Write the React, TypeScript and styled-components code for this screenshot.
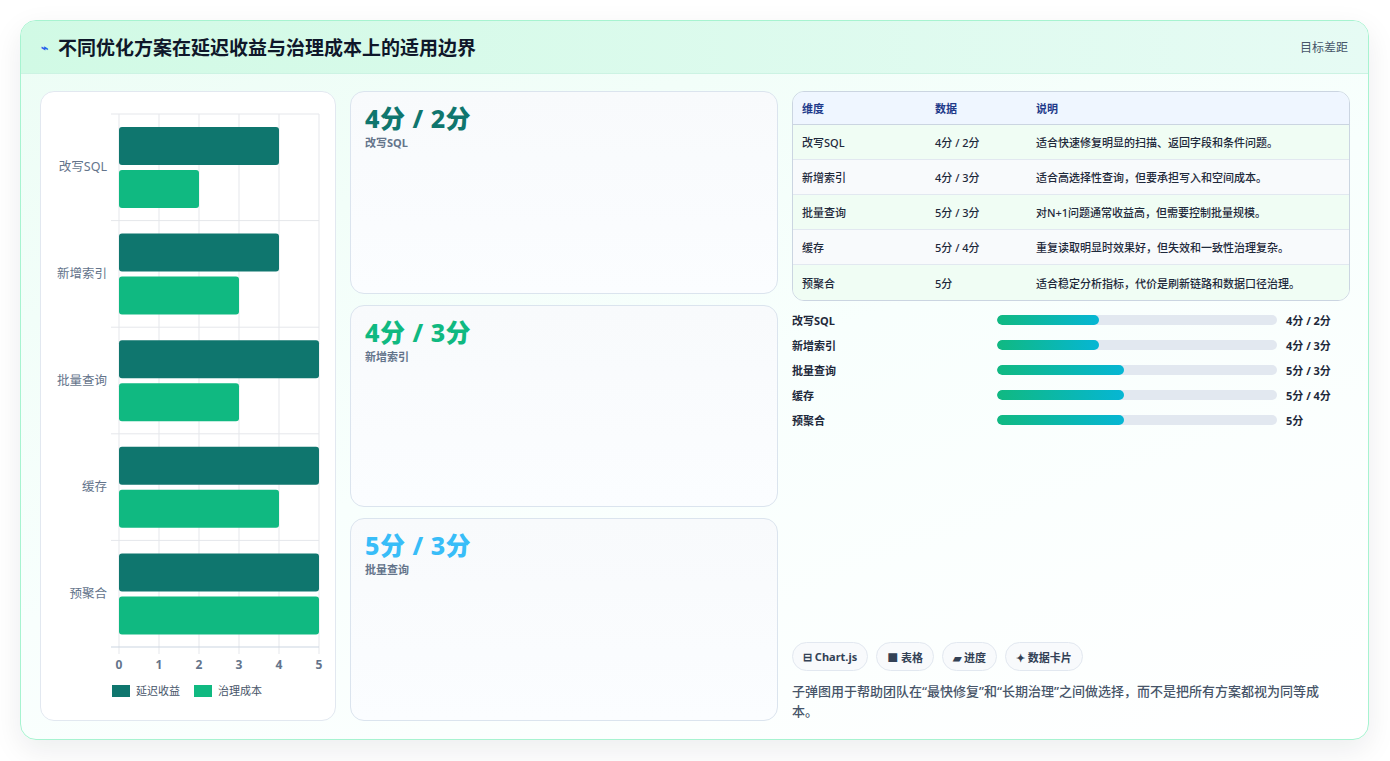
import React from "react";
import styled, { createGlobalStyle } from "styled-components";

const G = createGlobalStyle`
  html,body{margin:0;padding:0;background:#fff;}
  body{font-family:"Noto Sans","Noto Sans CJK SC",sans-serif;}
  *{box-sizing:border-box;}
`;
const Page = styled.div`padding:20px 20px 20px 20px;width:1390px;height:761px;`;
const Card = styled.div`
  width:1349px;height:720px;border:1px solid #a7f3d0;border-radius:16px;overflow:hidden;
  box-shadow:0 10px 30px rgba(15,23,42,0.08);
  background:linear-gradient(160deg,#ecfdf5 0%,#f8fffd 50%,#ffffff 100%);
  display:flex;flex-direction:column;
`;
const Header = styled.div`
  height:55px;display:flex;align-items:center;justify-content:space-between;padding:0 20px;
  background:linear-gradient(90deg,#d1fae5,#e6fbf4);border-bottom:1px solid #ccf3e3;
`;
const Title = styled.h1`margin:0;font-size:19px;font-weight:700;color:#0f172a;display:flex;align-items:center;gap:10px;`;
const Icon = styled.span`color:#2563eb;font-size:12px;`;
const Meta = styled.span`font-size:12px;color:#475569;`;
const Body = styled.div`flex:1;display:grid;grid-template-columns:296px 428px 1fr;gap:14px;padding:17px 18px 18px 19px;`;
const Panel = styled.div`background:#fff;border:1px solid #e2e8f0;border-radius:14px;`;
const Mid = styled.div`display:grid;grid-template-rows:repeat(3,1fr);gap:11px;`;
const Stat = styled.div`border:1px solid #dbe4ee;border-radius:14px;padding:10px 14px;background:linear-gradient(180deg,#f8fafc,#fbfdff);`;
const Big = styled.div<{ c: string }>`font-size:25px;font-weight:800;color:${p => p.c};line-height:32px;letter-spacing:0.5px;`;
const Sub = styled.div`font-size:11px;font-weight:700;color:#64748b;`;
const Right = styled.div`display:flex;flex-direction:column;`;
const Table = styled.table`width:100%;border-collapse:separate;border-spacing:0;border:1px solid #cbd5e1;border-radius:12px;overflow:hidden;font-size:11px;font-weight:500;color:#1e293b;`;
const Th = styled.th`text-align:left;font-weight:700;color:#1e3a8a;background:#eff6ff;height:33px;padding:0 9px;border-bottom:1px solid #cbd5e1;`;
const Tr = styled.tr<{ alt: boolean }>`background:${p => (p.alt ? "#f8fafc" : "#f0fdf4")};`;
const Td = styled.td<{ last?: boolean }>`height:35px;padding:0 9px;border-bottom:${p => (p.last ? "none" : "1px solid #e2e8f0")};`;
const Bars = styled.div`margin-top:11px;display:flex;flex-direction:column;gap:9px;`;
const BarRow = styled.div`display:grid;grid-template-columns:196px 280px 1fr;gap:9px;align-items:center;font-size:11px;font-weight:700;color:#1e293b;height:16px;`;
const Track = styled.div`height:10px;border-radius:5px;background:#e2e8f0;overflow:hidden;`;
const Fill = styled.div`height:100%;border-radius:5px;background:linear-gradient(90deg,#10b981,#06b6d4);`;
const Spacer = styled.div`flex:1;`;
const Chips = styled.div`display:flex;gap:8px;`;
const Chip = styled.span`height:29px;padding:0 10px;border:1px solid #e2e8f0;border-radius:15px;background:#f8fafc;font-size:11px;font-weight:700;color:#334155;display:flex;align-items:center;gap:4px;`;
const Desc = styled.p`margin:10px 0 0;font-size:13px;line-height:20px;color:#475569;font-weight:500;padding-right:22px;`;

const cats = ["改写SQL", "新增索引", "批量查询", "缓存", "预聚合"];
const a = [4, 4, 5, 5, 5];
const b = [2, 3, 3, 4, 5];

function Chart() {
  const x0 = 78, u = 40, top = 22, band = 106.6;
  return (
    <svg width="296" height="628" style={{ display: "block" }}>
      {[0, 1, 2, 3, 4, 5].map(i => (
        <line key={i} x1={x0 + i * u} x2={x0 + i * u} y1={top} y2={top + band * 5 + 7} stroke="#e5e7eb" />
      ))}
      {[0, 1, 2, 3, 4, 5].map(i => (
        <line key={"h" + i} x1={70} x2={x0 + 200} y1={top + band * i} y2={top + band * i} stroke={i === 5 ? "#cbd5e1" : "#e5e7eb"} />
      ))}
      {cats.map((c, i) => {
        const y = top + band * i;
        return (
          <g key={c}>
            <text x={66} y={y + band / 2 + 4} textAnchor="end" fontSize="12.5" fill="#64748b">{c}</text>
            <rect x={x0} y={y + 13} width={a[i] * u} height={38} rx="3" fill="#0f766e" />
            <rect x={x0} y={y + 56} width={b[i] * u} height={38} rx="3" fill="#10b981" />
          </g>
        );
      })}
      {[0, 1, 2, 3, 4, 5].map(i => (
        <text key={"t" + i} x={x0 + i * u} y={577} textAnchor="middle" fontSize="12" fontWeight="700" fill="#64748b">{i}</text>
      ))}
      <rect x={71} y={593} width={18} height={12} fill="#0f766e" />
      <text x={95} y={603} fontSize="11" fill="#475569">延迟收益</text>
      <rect x={153} y={593} width={18} height={12} fill="#10b981" />
      <text x={177} y={603} fontSize="11" fill="#475569">治理成本</text>
    </svg>
  );
}

const rows = [
  ["改写SQL", "4分 / 2分", "适合快速修复明显的扫描、返回字段和条件问题。"],
  ["新增索引", "4分 / 3分", "适合高选择性查询，但要承担写入和空间成本。"],
  ["批量查询", "5分 / 3分", "对N+1问题通常收益高，但需要控制批量规模。"],
  ["缓存", "5分 / 4分", "重复读取明显时效果好，但失效和一致性治理复杂。"],
  ["预聚合", "5分", "适合稳定分析指标，代价是刷新链路和数据口径治理。"],
];
const fills = [4, 4, 5, 5, 5];

export default function App() {
  return (
    <Page>
      <G />
      <Card>
        <Header>
          <Title><Icon>⌁</Icon>不同优化方案在延迟收益与治理成本上的适用边界</Title>
          <Meta>目标差距</Meta>
        </Header>
        <Body>
          <Panel><Chart /></Panel>
          <Mid>
            <Stat><Big c="#0f766e">4分 / 2分</Big><Sub>改写SQL</Sub></Stat>
            <Stat><Big c="#10b981">4分 / 3分</Big><Sub>新增索引</Sub></Stat>
            <Stat><Big c="#38bdf8">5分 / 3分</Big><Sub>批量查询</Sub></Stat>
          </Mid>
          <Right>
            <Table>
              <thead><tr><Th style={{ width: 133 }}>维度</Th><Th style={{ width: 101 }}>数据</Th><Th>说明</Th></tr></thead>
              <tbody>
                {rows.map((r, i) => (
                  <Tr key={i} alt={i % 2 === 1}>
                    {r.map((c, j) => <Td key={j} last={i === 4}>{c}</Td>)}
                  </Tr>
                ))}
              </tbody>
            </Table>
            <Bars>
              {rows.map((r, i) => (
                <BarRow key={i}>
                  <span>{r[0]}</span>
                  <Track><Fill style={{ width: `${(fills[i] / 11) * 100}%` }} /></Track>
                  <span>{r[1]}</span>
                </BarRow>
              ))}
            </Bars>
            <Spacer />
            <Chips>
              <Chip>⊟ Chart.js</Chip>
              <Chip>■ 表格</Chip>
              <Chip>▰ 进度</Chip>
              <Chip>✦ 数据卡片</Chip>
            </Chips>
            <Desc>子弹图用于帮助团队在“最快修复”和“长期治理”之间做选择，而不是把所有方案都视为同等成本。</Desc>
          </Right>
        </Body>
      </Card>
    </Page>
  );
}
